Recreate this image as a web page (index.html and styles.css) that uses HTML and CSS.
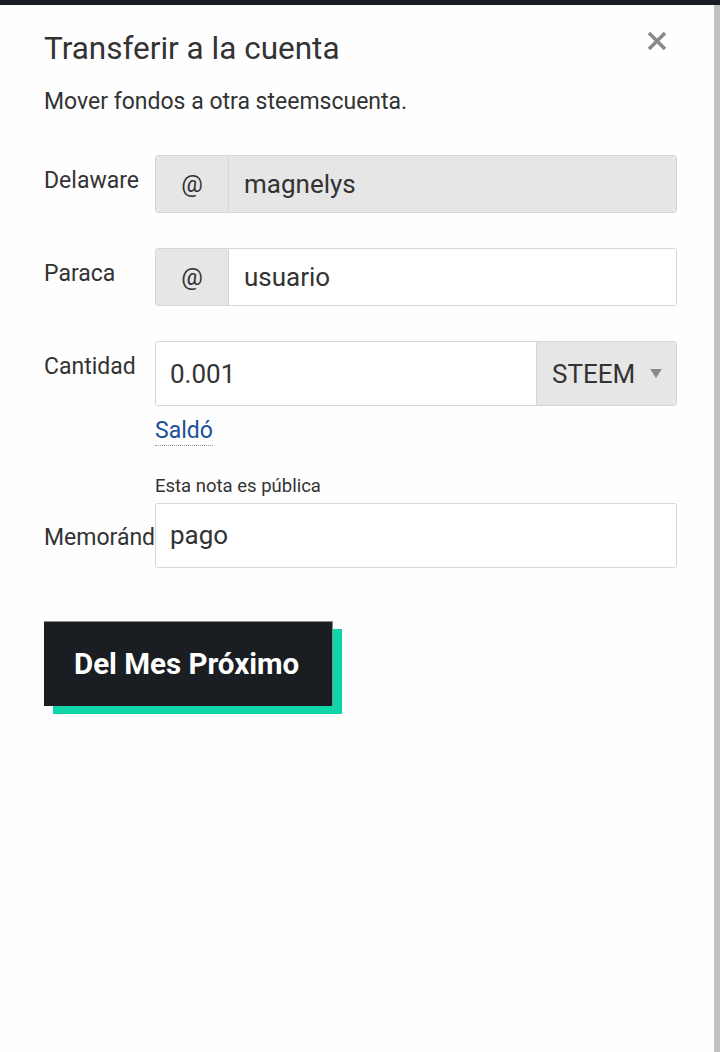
FILE: index.html
```html
<!DOCTYPE html>
<html lang="es">
<head>
<meta charset="UTF-8">
<meta name="viewport" content="width=device-width, initial-scale=1.0">
<title>Transferir a la cuenta</title>
<link rel="stylesheet" href="styles.css">
</head>
<body>
<div class="topbar"></div>
<div class="page">
  <div class="modal">
    <button class="close" aria-label="Cerrar">
      <svg width="20" height="20" viewBox="0 0 20 20">
        <path d="M2 2 L18 18 M18 2 L2 18" stroke="#8a8a8a" stroke-width="3.6" stroke-linecap="butt"/>
      </svg>
    </button>
    <h1>Transferir a la cuenta</h1>
    <p class="intro">Mover fondos a otra steemscuenta.</p>

    <form class="transfer">
      <div class="row">
        <label class="label">Delaware</label>
        <div class="field">
          <div class="group">
            <span class="addon">@</span>
            <input class="input disabled" type="text" value="magnelys" disabled>
          </div>
        </div>
      </div>

      <div class="row">
        <label class="label">Paraca</label>
        <div class="field">
          <div class="group">
            <span class="addon">@</span>
            <input class="input" type="text" value="usuario">
          </div>
        </div>
      </div>

      <div class="row">
        <label class="label">Cantidad</label>
        <div class="field">
          <div class="group tall">
            <input class="input amount" type="text" value="0.001">
            <div class="asset">
              <span>STEEM</span>
              <span class="caret"></span>
            </div>
          </div>
          <a class="balance" href="#">Saldó</a>
        </div>
      </div>

      <div class="row memo">
        <label class="label memo-label">Memoránd</label>
        <div class="field">
          <div class="note">Esta nota es pública</div>
          <div class="group tall">
            <input class="input amount" type="text" value="pago">
          </div>
        </div>
      </div>

      <button class="submit" type="button">Del Mes Próximo</button>
    </form>
  </div>
  <div class="edge"></div>
</div>
</body>
</html>
```

FILE: styles.css
```css
* {
  box-sizing: border-box;
}
body {
  margin: 0;
  padding: 0;
  font-family: Roboto, "Noto Sans", Arial, sans-serif;
  color: #333;
  background-color: #fefefe;
}
.topbar {
  height: 5px;
  background-color: #1b1f23;
}
.page {
  display: flex;
  min-height: 1047px;
}
.modal {
  position: relative;
  flex: 1;
  padding: 25px 37px 0 44px;
}
.edge {
  width: 6px;
  background-color: #c1c1c1;
}
.close {
  position: absolute;
  top: 26px;
  right: 47px;
  width: 20px;
  height: 20px;
  padding: 0;
  border: none;
  background: none;
  cursor: pointer;
}
.close svg {
  display: block;
}
h1 {
  margin: 0;
  font-size: 31.5px;
  font-weight: 400;
  line-height: 1.2;
  color: #333;
}
.intro {
  margin: 20px 0 0;
  font-size: 23px;
  line-height: 1.2;
}
.transfer {
  margin-top: 40px;
}
.row {
  display: flex;
  margin-bottom: 35px;
}
.label {
  width: 111px;
  padding-top: 12px;
  font-size: 23px;
  line-height: 1.2;
  white-space: nowrap;
}
.memo-label {
  padding-top: 49px;
}
.field {
  flex: 1;
}
.group {
  display: flex;
  height: 58px;
  border: 1px solid #d6d6d6;
  border-radius: 3px;
  overflow: hidden;
  background-color: #fff;
}
.group.tall {
  height: 65px;
}
.addon {
  display: flex;
  align-items: center;
  justify-content: center;
  width: 73px;
  font-size: 24px;
  background-color: #e6e6e6;
  border-right: 1px solid #d6d6d6;
}
.input {
  flex: 1;
  min-width: 0;
  padding: 0 15px;
  border: none;
  font-family: inherit;
  font-size: 26px;
  color: #333;
  background-color: #fff;
  outline: none;
}
.input.disabled {
  background-color: #e6e6e6;
}
.input.amount {
  padding-left: 14px;
}
.asset {
  display: flex;
  align-items: center;
  width: 140px;
  padding-left: 15px;
  font-size: 26px;
  background-color: #e6e6e6;
  border-left: 1px solid #d6d6d6;
}
.caret {
  margin-left: 15px;
  border-left: 6px solid transparent;
  border-right: 6px solid transparent;
  border-top: 9px solid #8a8a8a;
}
.balance {
  display: inline-block;
  margin-top: 11px;
  font-size: 23px;
  line-height: 1.2;
  color: #1a5099;
  text-decoration: none;
  border-bottom: 1px dotted #999;
}
.memo {
  margin-top: -6px;
}
.note {
  margin-bottom: 6px;
  font-size: 18.5px;
  line-height: 22px;
}
.submit {
  display: block;
  margin-top: 53px;
  width: 289px;
  height: 85px;
  padding: 0 30px;
  text-align: left;
  font-family: inherit;
  font-size: 29.5px;
  font-weight: 700;
  color: #fff;
  background-color: #1a1e22;
  border: 1px solid #8a8d90;
  border-width: 1px 1px 0 0;
  box-shadow: 9px 8px 0 #0fd5a8;
  cursor: pointer;
}
```
